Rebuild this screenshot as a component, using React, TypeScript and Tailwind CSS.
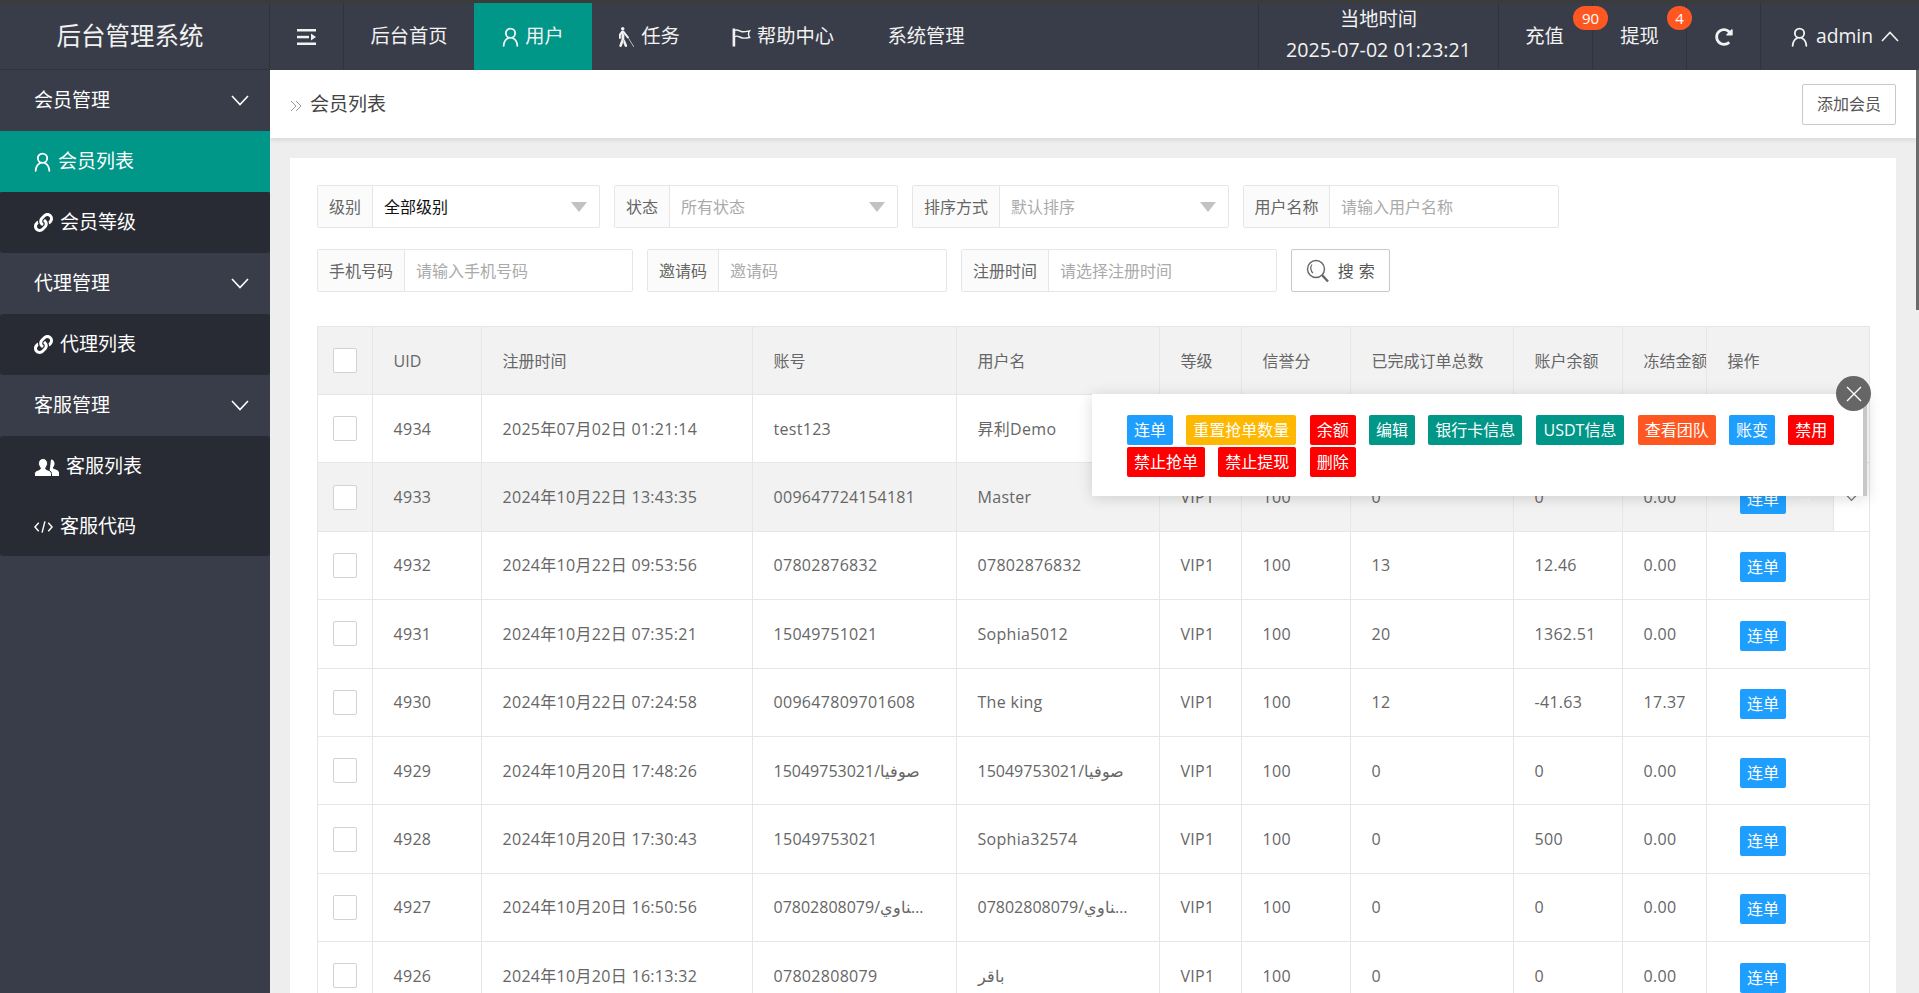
import { ReactNode } from "react";
import { FaBlind, FaLink, FaRedoAlt } from "react-icons/fa";

const font = { fontFamily: '"Open Sans","Noto Sans CJK SC",sans-serif' };

interface Member {
  uid: string;
  time: string;
  account: string;
  name: string;
  orders: string;
  balance: string;
  frozen: string;
}

const members: Member[] = [
  { uid: "4934", time: "2025年07月02日 01:21:14", account: "test123", name: "昇利Demo", orders: "0", balance: "0", frozen: "0.00" },
  { uid: "4933", time: "2024年10月22日 13:43:35", account: "009647724154181", name: "Master", orders: "0", balance: "0", frozen: "0.00" },
  { uid: "4932", time: "2024年10月22日 09:53:56", account: "07802876832", name: "07802876832", orders: "13", balance: "12.46", frozen: "0.00" },
  { uid: "4931", time: "2024年10月22日 07:35:21", account: "15049751021", name: "Sophia5012", orders: "20", balance: "1362.51", frozen: "0.00" },
  { uid: "4930", time: "2024年10月22日 07:24:58", account: "009647809701608", name: "The king", orders: "12", balance: "-41.63", frozen: "17.37" },
  { uid: "4929", time: "2024年10月20日 17:48:26", account: "15049753021/صوفيا", name: "15049753021/صوفيا", orders: "0", balance: "0", frozen: "0.00" },
  { uid: "4928", time: "2024年10月20日 17:30:43", account: "15049753021", name: "Sophia32574", orders: "0", balance: "500", frozen: "0.00" },
  { uid: "4927", time: "2024年10月20日 16:50:56", account: "07802808079/الحسناوي", name: "07802808079/الحسناوي", orders: "0", balance: "0", frozen: "0.00" },
  { uid: "4926", time: "2024年10月20日 16:13:32", account: "07802808079", name: "باقر", orders: "0", balance: "0", frozen: "0.00" },
];

const UserIcon = ({ className }: { className: string }) => (
  <svg viewBox="0 0 20 24" fill="none" stroke="currentColor" strokeWidth="2.2" strokeLinecap="round" className={className}>
    <circle cx="10" cy="7.5" r="5.6" />
    <path d="M7 13.5C3.8 15 2 18.5 1.8 22.5M13 13.5c3.2 1.500 5 5 5.200 9" />
  </svg>
);

const Chevron = ({ up, className }: { up?: boolean; className: string }) => (
  <svg viewBox="0 0 18 11" fill="none" stroke="currentColor" strokeWidth="1.6" className={className}>
    <path d={up ? "M1 10l8-8.500 8 8.500" : "M1 1l8 8.500 8-8.500"} />
  </svg>
);

const FlagIcon = () => (
  <svg viewBox="0 0 20 20" fill="none" stroke="currentColor" className="h-[20px] w-[19px]">
    <path d="M2 1v19" strokeWidth="2.800" />
    <path d="M3 3c3-1.500 5 1 8 1.500 2 .3 5-.5 7.500-1-1.500 2-1.500 4.500 0 7-2.500 .5-5 1-7.500 .5-3-.5-5-3-8-1.500" strokeWidth="1.500" />
  </svg>
);

const ShrinkIcon = () => (
  <svg viewBox="0 0 19 16" fill="currentColor" className="h-[16px] w-[19px]">
    <rect x="0" y="0" width="19" height="2.500" />
    <rect x="0" y="6.800" width="12" height="2.500" />
    <path d="M14 4.500L19 8l-5 3.500z" />
    <rect x="0" y="13.500" width="19" height="2.500" />
  </svg>
);

const CodeIcon = () => (
  <svg viewBox="0 0 20 14" fill="none" stroke="currentColor" strokeWidth="1.500" className="h-[14px] w-[19px]">
    <path d="M5 2.500L1 7l4 4.500M15 2.500L19 7l-4 4.500M11.500 1L8.500 13" />
  </svg>
);

const SearchIcon = () => (
  <svg viewBox="0 0 24 24" fill="none" stroke="#666" className="h-[24px] w-[24px]">
    <circle cx="10" cy="10" r="8.500" strokeWidth="1.400" />
    <path d="M6 5.500C4 8 4.500 12 7 14" strokeWidth="1.200" />
    <path d="M16 16l6 6.500" strokeWidth="2.400" />
  </svg>
);

const UsersIcon = () => (
  <svg viewBox="0 0 25 18" className="h-[18px] w-[25px]">
    <path fill="currentColor" d="M17 1.500c2.200 0 3.500 1.800 3.500 4 0 1.800-.8 3-1.500 4-.3.500 0 1 .5 1.300 1.800 .8 5.500 1.500 5.500 4V18h-10z" />
    <path fill="currentColor" stroke="#282b33" strokeWidth="1" d="M9 .5c2.800 0 4.500 2.200 4.500 4.800 0 2-1 3.500-1.800 4.700-.3.500 0 1.100 .6 1.400 2.200 .9 5.200 1.700 5.200 4.100V18.500H.5v-3c0-2.400 3-3.200 5.200-4.100 .6-.3 .9-.9 .6-1.400C5.500 8.800 4.500 7.300 4.500 5.300 4.500 2.700 6.200 .5 9 .5z" />
  </svg>
);

const SideGroup = ({ label }: { label: string }) => (
  <div className="flex h-[61px] items-center justify-between pl-[34px] pr-[21px] text-[19px] text-white">
    {label}
    <Chevron className="h-[11px] w-[18px]" />
  </div>
);

const SideItem = ({ icon, label, active, height = "h-[61px]" }: { icon: ReactNode; label: string; active?: boolean; height?: string }) => (
  <div className={`flex items-center gap-[7px] pl-[34px] text-[19px] text-white ${height} ${active ? "bg-[#009688]" : ""}`}>
    {icon}
    {label}
  </div>
);

const Sidebar = () => (
  <aside className="w-[270px] shrink-0 bg-[#393d49]">
    <div className="flex h-[67px] items-center justify-center border-b border-r border-[#30333e] pr-[9px] text-[24.5px] text-[#f2f2f2]">
      后台管理系统
    </div>
    <SideGroup label="会员管理" />
    <SideItem active icon={<UserIcon className="h-[20px] w-[17px]" />} label="会员列表" />
    <div className="rounded-[3px] bg-[#282b33]">
      <SideItem icon={<FaLink className="h-[19px] w-[19px]" />} label="会员等级" />
    </div>
    <SideGroup label="代理管理" />
    <div className="rounded-[3px] bg-[#282b33]">
      <SideItem icon={<FaLink className="h-[19px] w-[19px]" />} label="代理列表" />
    </div>
    <SideGroup label="客服管理" />
    <div className="rounded-[3px] bg-[#282b33]">
      <SideItem icon={<UsersIcon />} label="客服列表" />
      <SideItem height="h-[59px]" icon={<CodeIcon />} label="客服代码" />
    </div>
  </aside>
);

const NavItem = ({ width, active, children }: { width: string; active?: boolean; children: ReactNode }) => (
  <div className={`flex h-full items-center justify-center gap-[6px] ${width} ${active ? "bg-[#009688]" : ""}`}>{children}</div>
);

const Badge = ({ className, children }: { className: string; children: ReactNode }) => (
  <span className={`absolute top-[3px] flex h-[24px] items-center justify-center rounded-full bg-[#ff5722] text-[15px] text-white ${className}`}>
    {children}
  </span>
);

const Header = () => (
  <header className="flex h-[67px] shrink-0 items-stretch bg-[#393d49] text-[19.3px] text-[#f2f2f2]">
    <div className="flex w-[74px] items-center justify-center border-r border-[#30333e]">
      <ShrinkIcon />
    </div>
    <NavItem width="w-[130px]">后台首页</NavItem>
    <NavItem width="w-[118px]" active>
      <UserIcon className="h-[20px] w-[17px]" />
      用户
    </NavItem>
    <NavItem width="w-[114px]">
      <FaBlind className="h-[20px] w-[17px]" />
      任务
    </NavItem>
    <NavItem width="w-[154px]">
      <FlagIcon />
      帮助中心
    </NavItem>
    <NavItem width="w-[132px]">系统管理</NavItem>
    <div className="w-[266px]" />
    <div className="flex w-[241px] flex-col items-center border-x border-[#30333e] leading-[31px]">
      <span>当地时间</span>
      <span className="text-[19.6px]">2025-07-02 01:23:21</span>
    </div>
    <div className="relative flex w-[94px] items-center justify-center border-r border-[#30333e]">
      <span className="-ml-[2px]">充值</span>
      <Badge className="left-[74px] w-[35px]">90</Badge>
    </div>
    <div className="relative flex w-[94px] items-center justify-center border-r border-[#30333e]">
      <span>提现</span>
      <Badge className="left-[74px] w-[25px]">4</Badge>
    </div>
    <div className="flex w-[74px] items-center justify-center border-r border-[#30333e]">
      <FaRedoAlt className="h-[18px] w-[18px]" />
    </div>
    <div className="flex flex-1 items-center gap-[8px] pl-[30px] font-medium">
      <UserIcon className="h-[20px] w-[17px]" />
      admin
      <Chevron up className="h-[11px] w-[18px]" />
    </div>
  </header>
);

const Field = ({ width, labelWidth, label, children }: { width: string; labelWidth: string; label: string; children: ReactNode }) => (
  <div className={`flex h-[43px] rounded-[2px] border border-[#e6e6e6] text-[16px] ${width}`}>
    <div className={`flex shrink-0 items-center justify-center border-r border-[#e6e6e6] bg-[#fbfbfb] text-[#666] ${labelWidth}`}>{label}</div>
    <div className="flex flex-1 items-center justify-between pl-[11px] pr-[12px]">{children}</div>
  </div>
);

const Caret = () => <span className="h-0 w-0 border-x-[8px] border-t-[10px] border-x-transparent border-t-[#c2c2c2]" />;

const Filters = () => (
  <div className="flex flex-col gap-[21px]">
    <div className="flex gap-[14px]">
      <Field width="w-[283px]" labelWidth="w-[55px]" label="级别">
        <span className="text-[#111]">全部级别</span>
        <Caret />
      </Field>
      <Field width="w-[284px]" labelWidth="w-[55px]" label="状态">
        <span className="text-[#aaa]">所有状态</span>
        <Caret />
      </Field>
      <Field width="w-[317px]" labelWidth="w-[87px]" label="排序方式">
        <span className="text-[#aaa]">默认排序</span>
        <Caret />
      </Field>
      <Field width="w-[316px]" labelWidth="w-[86px]" label="用户名称">
        <span className="text-[#aaa]">请输入用户名称</span>
      </Field>
    </div>
    <div className="flex gap-[14px]">
      <Field width="w-[316px]" labelWidth="w-[87px]" label="手机号码">
        <span className="text-[#aaa]">请输入手机号码</span>
      </Field>
      <Field width="w-[300px]" labelWidth="w-[71px]" label="邀请码">
        <span className="text-[#aaa]">邀请码</span>
      </Field>
      <Field width="w-[316px]" labelWidth="w-[87px]" label="注册时间">
        <span className="text-[#aaa]">请选择注册时间</span>
      </Field>
      <button className="flex h-[43px] w-[99px] items-center justify-center gap-[8px] rounded-[2px] border border-[#c9c9c9] text-[16px] text-[#555]">
        <SearchIcon />
        <span className="tracking-[0.5px]">搜 索</span>
      </button>
    </div>
  </div>
);

const Check = () => <span className="block h-[25px] w-[24px] rounded-[2px] border border-[#d2d2d2] bg-white" />;

const cell = "border border-[#e6e6e6] px-[20.5px] text-left font-normal whitespace-nowrap overflow-hidden";
const leftShadow = "relative z-10 shadow-[4px_0_8px_-4px_rgba(0,0,0,0.12)]";
const rightShadow = "relative z-10 shadow-[-4px_0_8px_-4px_rgba(0,0,0,0.16)]";

const MemberTable = () => (
  <table className="mt-[34px] w-[1552px] table-fixed border-collapse text-[16px] text-[#666]">
    <colgroup>
      <col className="w-[55px]" />
      <col className="w-[109px]" />
      <col className="w-[271px]" />
      <col className="w-[204px]" />
      <col className="w-[203px]" />
      <col className="w-[82px]" />
      <col className="w-[109px]" />
      <col className="w-[163px]" />
      <col className="w-[109px]" />
      <col className="w-[84px]" />
      <col className="w-[163px]" />
    </colgroup>
    <thead>
      <tr className="h-[68px] bg-[#f2f2f2]">
        <th className={`${cell} !px-[15px]`}><Check /></th>
        <th className={`${cell} ${leftShadow} bg-[#f2f2f2]`}>UID</th>
        <th className={cell}>注册时间</th>
        <th className={cell}>账号</th>
        <th className={cell}>用户名</th>
        <th className={cell}>等级</th>
        <th className={cell}>信誉分</th>
        <th className={cell}>已完成订单总数</th>
        <th className={cell}>账户余额</th>
        <th className={cell}>冻结金额</th>
        <th className={`${cell} ${rightShadow} bg-[#f2f2f2]`}>操作</th>
      </tr>
    </thead>
    <tbody className="tracking-[0.3px]">
      {members.map((m) => {
        const hover = m.uid === "4933";
        const bg = hover ? "bg-[#f2f2f2]" : "bg-white";
        return (
          <tr key={m.uid} className={`h-[68.4px] ${bg}`}>
            <td className={`${cell} !px-[15px]`}><Check /></td>
            <td className={`${cell} ${leftShadow} ${bg}`}>{m.uid}</td>
            <td className={cell}>{m.time}</td>
            <td className={`${cell} truncate !pr-[26px]`}>{m.account}</td>
            <td className={`${cell} truncate !pr-[26px]`}>{m.name}</td>
            <td className={cell}>VIP1</td>
            <td className={cell}>100</td>
            <td className={cell}>{m.orders}</td>
            <td className={cell}>{m.balance}</td>
            <td className={cell}>{m.frozen}</td>
            <td className={`${cell} ${rightShadow} ${bg} !p-0`}>
              <div className="flex items-center pl-[33px]">
                <span className="mt-[4px] flex h-[30px] w-[46px] items-center justify-center rounded-[2px] bg-[#1e9fff] tracking-normal text-white">连单</span>
                {hover && (
                  <>
                    <span className="ml-[14px] text-[12px] text-white">...</span>
                    <span className="absolute inset-y-0 right-0 flex w-[36px] items-center justify-center border-l border-[#e6e6e6] bg-white text-[#777]">
                      <Chevron className="h-[10px] w-[15px]" />
                    </span>
                  </>
                )}
              </div>
            </td>
          </tr>
        );
      })}
    </tbody>
  </table>
);

const tipButtons = [
  { label: "连单", color: "bg-[#1e9fff] px-[7px]" },
  { label: "重置抢单数量", color: "bg-[#ffb800] px-[7px]" },
  { label: "余额", color: "bg-[#ff0000] px-[7px]" },
  { label: "编辑", color: "bg-[#009688] px-[7px]" },
  { label: "银行卡信息", color: "bg-[#009688] px-[7px]" },
  { label: "USDT信息", color: "bg-[#009688] px-[8px]" },
  { label: "查看团队", color: "bg-[#ff5722] px-[7px]" },
  { label: "账变", color: "bg-[#1e9fff] px-[7px]" },
  { label: "禁用", color: "bg-[#ff0000] px-[7px]" },
  { label: "禁止抢单", color: "bg-[#ff0000] px-[7px]" },
  { label: "禁止提现", color: "bg-[#ff0000] px-[7px]" },
  { label: "删除", color: "bg-[#ff0000] px-[7px]" },
];

const ActionTip = () => (
  <div className="absolute left-[1092px] top-[394px] z-20 h-[102px] w-[775px] border-r-[4px] border-[#c8c8c8] bg-white pl-[35px] pt-[21px] shadow-[0_2px_14px_rgba(0,0,0,0.15)]">
    <div className="flex w-[725px] flex-wrap gap-x-[13.3px] gap-y-[2px]">
      {tipButtons.map((b) => (
        <span key={b.label} className={`flex h-[30px] items-center rounded-[2px] text-[16px] text-white ${b.color}`}>
          {b.label}
        </span>
      ))}
    </div>
    <span className="absolute -right-[8px] -top-[18px] flex h-[35px] w-[35px] items-center justify-center rounded-full bg-[#666] text-white">
      <svg viewBox="0 0 16 16" fill="none" stroke="currentColor" strokeWidth="1.400" className="h-[16px] w-[16px]">
        <path d="M1 1l14 14M15 1L1 15" />
      </svg>
    </span>
  </div>
);

export default function App() {
  return (
    <div style={font} className="relative h-[993px] w-[1919px] overflow-hidden bg-[#393d49]">
      <div className="h-[3px] bg-[#3b3b3a]" />
      <div className="flex h-[990px]">
        <Sidebar />
        <div className="flex min-w-0 flex-1 flex-col">
          <Header />
          <main className="flex-1 overflow-hidden bg-[#eeeeee]">
            <div className="flex h-[68px] w-[1646px] items-center justify-between bg-white pl-[20px] pr-[20px] shadow-[0_2px_5px_rgba(0,0,0,0.1)]">
              <div className="flex items-center gap-[8px] text-[19px] text-[#444]">
                <svg viewBox="0 0 12 12" fill="none" stroke="#999" strokeWidth="1" className="mt-[3px] h-[12px] w-[12px]">
                  <path d="M1 1l5 5-5 5M6 1l5 5-5 5" />
                </svg>
                会员列表
              </div>
              <button className="flex h-[41px] w-[94px] items-center justify-center rounded-[2px] border border-[#c9c9c9] text-[16px] text-[#555]">
                添加会员
              </button>
            </div>
            <div className="ml-[20px] mt-[20px] w-[1606px] bg-white pl-[27px] pt-[27px] pb-[40px]">
              <Filters />
              <MemberTable />
            </div>
          </main>
        </div>
      </div>
      <ActionTip />
      <div className="absolute right-0 top-[70px] h-[240px] w-[3px] bg-[#6b6b6b]" />
    </div>
  );
}
